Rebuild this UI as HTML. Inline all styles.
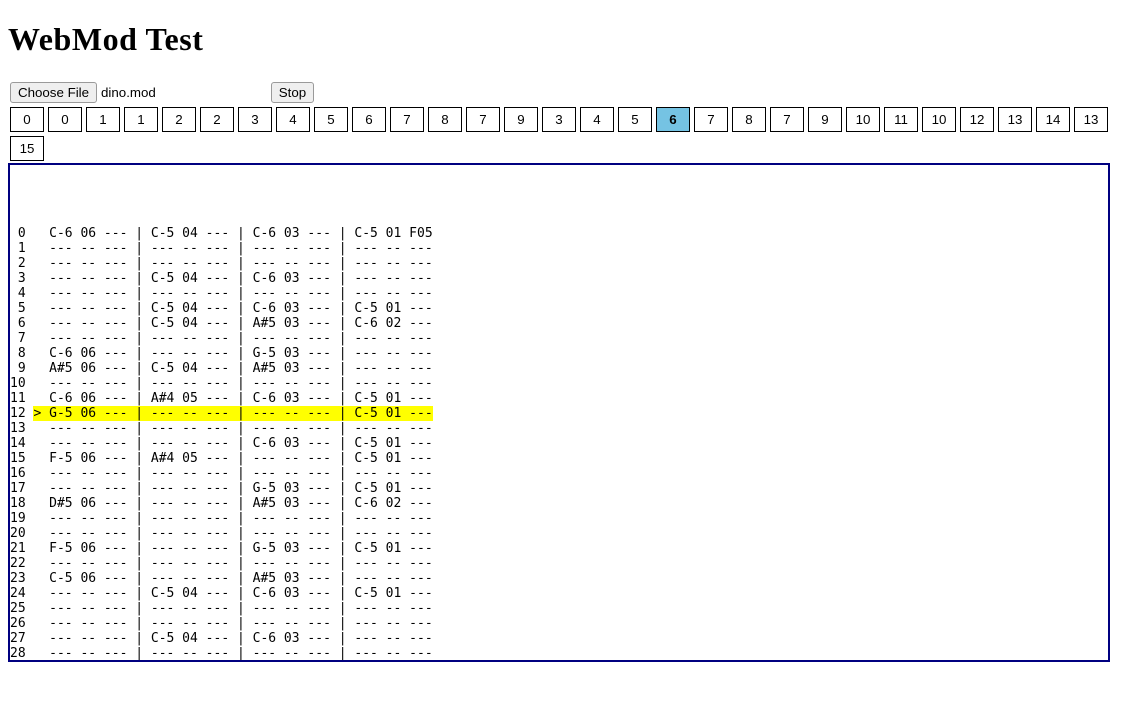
<!DOCTYPE html>
<html>
<head>
<meta charset="utf-8">
<title>WebMod Test</title>
<style>
html,body{margin:0;padding:0;background:#fff;width:1121px;height:711px;overflow:hidden}
body{position:relative;font-family:"Liberation Sans",sans-serif;color:#000}
h1{position:absolute;left:8px;top:21px;margin:0;font:bold 32px/37px "Liberation Serif",serif;letter-spacing:.55px;white-space:nowrap}
.nb{position:absolute;top:82px;height:21px;box-sizing:border-box;padding:0;margin:0;background:#efefef;border:1px solid #9a9a9a;border-radius:3px;font:13.33px/19px "Liberation Sans",sans-serif;color:#000;text-align:center}
#fn{position:absolute;left:101px;top:82px;font:13.33px/21px "Liberation Sans",sans-serif}
#seq{position:absolute;left:0;top:0}
#seq b{position:absolute;width:34px;height:25px;box-sizing:border-box;border:1px solid #000;background:#fff;font:13.33px/23px "Liberation Sans",sans-serif;text-align:center}
#seq b.on{background:#75c3e3;font-weight:bold}
#box{position:absolute;left:8px;top:163px;width:1102px;height:499px;box-sizing:border-box;border:2px solid #000080;overflow:hidden;background:#fff}
#box pre{position:absolute;left:0;top:61px;margin:0;font:13px/15px "DejaVu Sans Mono",monospace;white-space:pre}
#box i{font-style:normal;background:#ff0}
</style>
</head>
<body>
<h1>WebMod Test</h1>
<div class="nb" style="left:10px;width:87px">Choose File</div>
<div id="fn">dino.mod</div>
<div class="nb" style="left:271px;width:43px">Stop</div>
<div id="seq">
<b style="left:10px;top:107px">0</b><b style="left:48px;top:107px">0</b><b style="left:86px;top:107px">1</b><b style="left:124px;top:107px">1</b><b style="left:162px;top:107px">2</b><b style="left:200px;top:107px">2</b><b style="left:238px;top:107px">3</b><b style="left:276px;top:107px">4</b><b style="left:314px;top:107px">5</b><b style="left:352px;top:107px">6</b><b style="left:390px;top:107px">7</b><b style="left:428px;top:107px">8</b><b style="left:466px;top:107px">7</b><b style="left:504px;top:107px">9</b><b style="left:542px;top:107px">3</b><b style="left:580px;top:107px">4</b><b style="left:618px;top:107px">5</b><b class="on" style="left:656px;top:107px">6</b><b style="left:694px;top:107px">7</b><b style="left:732px;top:107px">8</b><b style="left:770px;top:107px">7</b><b style="left:808px;top:107px">9</b><b style="left:846px;top:107px">10</b><b style="left:884px;top:107px">11</b><b style="left:922px;top:107px">10</b><b style="left:960px;top:107px">12</b><b style="left:998px;top:107px">13</b><b style="left:1036px;top:107px">14</b><b style="left:1074px;top:107px">13</b><b style="left:10px;top:136px">15</b>
</div>
<div id="box"><pre> 0   C-6 06 --- | C-5 04 --- | C-6 03 --- | C-5 01 F05
 1   --- -- --- | --- -- --- | --- -- --- | --- -- ---
 2   --- -- --- | --- -- --- | --- -- --- | --- -- ---
 3   --- -- --- | C-5 04 --- | C-6 03 --- | --- -- ---
 4   --- -- --- | --- -- --- | --- -- --- | --- -- ---
 5   --- -- --- | C-5 04 --- | C-6 03 --- | C-5 01 ---
 6   --- -- --- | C-5 04 --- | A#5 03 --- | C-6 02 ---
 7   --- -- --- | --- -- --- | --- -- --- | --- -- ---
 8   C-6 06 --- | --- -- --- | G-5 03 --- | --- -- ---
 9   A#5 06 --- | C-5 04 --- | A#5 03 --- | --- -- ---
10   --- -- --- | --- -- --- | --- -- --- | --- -- ---
11   C-6 06 --- | A#4 05 --- | C-6 03 --- | C-5 01 ---
12 <i>&gt; G-5 06 --- | --- -- --- | --- -- --- | C-5 01 ---</i>
13   --- -- --- | --- -- --- | --- -- --- | --- -- ---
14   --- -- --- | --- -- --- | C-6 03 --- | C-5 01 ---
15   F-5 06 --- | A#4 05 --- | --- -- --- | C-5 01 ---
16   --- -- --- | --- -- --- | --- -- --- | --- -- ---
17   --- -- --- | --- -- --- | G-5 03 --- | C-5 01 ---
18   D#5 06 --- | --- -- --- | A#5 03 --- | C-6 02 ---
19   --- -- --- | --- -- --- | --- -- --- | --- -- ---
20   --- -- --- | --- -- --- | --- -- --- | --- -- ---
21   F-5 06 --- | --- -- --- | G-5 03 --- | C-5 01 ---
22   --- -- --- | --- -- --- | --- -- --- | --- -- ---
23   C-5 06 --- | --- -- --- | A#5 03 --- | --- -- ---
24   --- -- --- | C-5 04 --- | C-6 03 --- | C-5 01 ---
25   --- -- --- | --- -- --- | --- -- --- | --- -- ---
26   --- -- --- | --- -- --- | --- -- --- | --- -- ---
27   --- -- --- | C-5 04 --- | C-6 03 --- | --- -- ---
28   --- -- --- | --- -- --- | --- -- --- | --- -- ---</pre></div>
</body>
</html>
